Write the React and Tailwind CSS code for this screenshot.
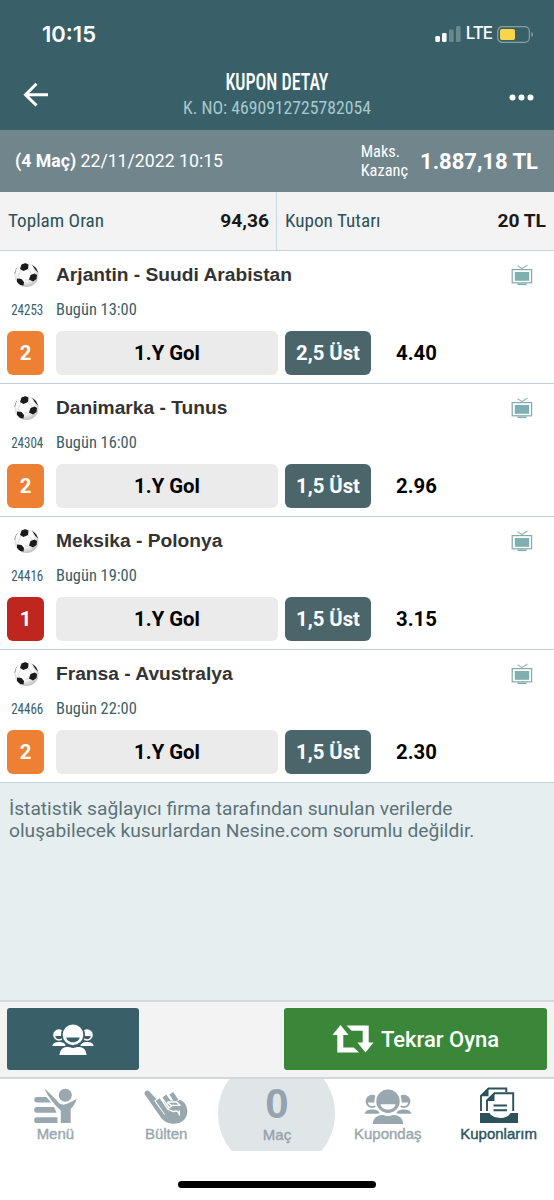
import React from 'react';

const matches = [
  { code: '24253', teams: 'Arjantin - Suudi Arabistan', time: 'Bugün 13:00', mbs: 2, pick: '2,5 Üst', odd: '4.40' },
  { code: '24304', teams: 'Danimarka - Tunus', time: 'Bugün 16:00', mbs: 2, pick: '1,5 Üst', odd: '2.96' },
  { code: '24416', teams: 'Meksika - Polonya', time: 'Bugün 19:00', mbs: 1, pick: '1,5 Üst', odd: '3.15' },
  { code: '24466', teams: 'Fransa - Avustralya', time: 'Bugün 22:00', mbs: 2, pick: '1,5 Üst', odd: '2.30' },
];

const BallIcon = () => (
  <svg width="26" height="26" viewBox="0 0 26 26">
    <defs>
      <radialGradient id="ball" cx="45%" cy="40%" r="58%">
        <stop offset="0.6" stopColor="#fbfbfb" />
        <stop offset="1" stopColor="#c4c4c4" />
      </radialGradient>
      <clipPath id="ballClip">
        <circle cx="13.5" cy="13" r="12" />
      </clipPath>
    </defs>
    <circle cx="13.5" cy="13" r="12" fill="url(#ball)" />
    <g clipPath="url(#ballClip)">
      <path d="M8 8l-3 6 3 4M15 7l4 5M12 18h5l3-3" stroke="#cfcfcf" strokeWidth="0.7" fill="none" />
      <g fill="#1a1a1a">
        <path d="M8.500 2.500L12 1l3.500 1.500-.5 4.500-4.500 2-3.500-2z" />
        <path d="M17.500 13l4-1.500 2.500 1.500-.5 4-3.500 2.500-4-2z" />
        <path d="M4 16.500l4.500.5 2.500 3-.5 3.500-3.500-.5-3-3z" />
        <path d="M1 11l1-5 3-2.500-2.500 5L2 12zM19 2.500l4 3.500 2.500 5-3.500-3.500z" />
      </g>
    </g>
  </svg>
);

const TvIcon = () => (
  <svg width="22" height="22" viewBox="0 0 22 22" fill="none">
    <path d="M6.500 1.800L11 4.500l5.500-3.500" stroke="#9fb5b8" strokeWidth="1.100" />
    <rect x="1.200" y="5.600" width="19.400" height="13.200" stroke="#82a9ac" strokeWidth="1.200" />
    <rect x="3.800" y="8" width="14.400" height="8.800" fill="#80afb1" />
    <path d="M6.500 20.300h9" stroke="#82a9ac" strokeWidth="1.600" />
  </svg>
);

const PeopleIcon = ({ width, height, bg }) => (
  <svg width={width} height={height} viewBox="0 0 42 31" fill="currentColor" stroke={bg}>
    {[7, 35].map((x) => (
      <g key={x} stroke="none">
        <circle cx={x} cy="11" r="5.8" />
        <path d={`M${x - 3.8} 12h7.6c-.6 4.4-7 4.4-7.6 0z`} fill={bg} />
        <path d={`M${x - 6.6} 22c.3-2.8 3-3.9 6.6-3.9s6.3 1.1 6.6 3.9z`} />
      </g>
    ))}
    <circle cx="21" cy="10.800" r="11.200" strokeWidth="1.700" />
    <path d="M14.300 13.500h13.400c-1 6.300-12.400 6.300-13.400 0z" fill={bg} stroke="none" />
    <path d="M6.500 31.800c.2-6.500 4.500-9.800 10-9.800 2.500 1.200 6.500 1.200 9 0 5.500 0 9.800 3.300 10 9.800z" strokeWidth="1.600" />
  </svg>
);

const MenuIcon = () => (
  <svg width="44" height="36" viewBox="0 0 44 36" fill="currentColor">
    <path d="M4 9h9.500l4.500 5.500H4A2.750 2.750 0 014 9zM4 19h17l2.500 5.700H4A2.850 2.850 0 014 19zM4 29.300h20.500V35H4a2.850 2.850 0 010-5.700z" />
    <circle cx="32.300" cy="7.200" r="6.500" />
    <path d="M11.300.5C17 5.500 23 11 26.300 15.500c3 1.500 5.500 1.500 8.200 0 3.200-1.500 6.500-3 9.200-4.800-1.200 4.300-3.400 7.800-6 10.300V35h-9.900V22.500C21.500 17 15.500 9.500 11.300.5z" />
  </svg>
);

const HandIcon = () => (
  <svg width="44" height="35" viewBox="0 0 132 105" fill="none" strokeLinecap="round" strokeLinejoin="round">
    <path
      d="M2 16C-1 6 11 1 17 8l36 40c8-12 22-18 40-18 23 0 37 16 37 37s-16 37-38 37c-20 0-34-7-43-21z"
      fill="currentColor"
    />
    <g strokeLinecap="butt">
      <path d="M39 29l31 43M58 19l29 38M79 10l20 28" stroke="#fff" strokeWidth="21" />
      <path d="M41 32l29 42M61 21l25 34M82 13l15 23" stroke="currentColor" strokeWidth="14" />
    </g>
    <path d="M75 35h31c10 6 15 17 12 29l-14 14-8-11-20 2-10-9 14-7z" fill="currentColor" />
    <path d="M72 39h26l10 10H82L70 41M84 50l-14 10 18 8c10-5 17 0 18 10V66" stroke="#fff" strokeWidth="4" />
  </svg>
);

const CouponsIcon = () => (
  <svg width="40" height="37" viewBox="0 0 40 37" fill="none" stroke="currentColor" strokeWidth="1.900">
    <path d="M2 24V9l7.500-7.500h17.800V5" />
    <path d="M1.200 9.200L9.500 1v8.200z" fill="currentColor" stroke="none" />
    <path d="M8 24V13.500L15.500 6.300h18.700V24" />
    <path d="M7.200 14l8.300-8v8z" fill="currentColor" stroke="none" />
    <path d="M14.500 18.500h13.500M14.500 23.200h13.500" />
    <path d="M1 26h9.500c4 6.500 18 6.500 21 0H39v10H1z" fill="currentColor" stroke="none" />
  </svg>
);

const RepeatIcon = () => (
  <svg width="42" height="28" viewBox="0 0 42 28" fill="currentColor">
    <path d="M8.500 0l8 10h-5.200v12.500h10.500l5.200 5H5.300V10H.5z" />
    <path d="M14.500.5h22.200v17h4.800l-8 10-8-10h5.200V5.800H19.700z" />
  </svg>
);

const MatchRow = ({ match }) => (
  <div className="h-[133px] border-b border-[#c3d2df] bg-white">
    <div className="flex h-12 items-center pl-[13px] pr-[21px]">
      <BallIcon />
      <h3 className="ml-[17px] flex-1 whitespace-nowrap font-['Liberation_Sans'] text-[19.2px] font-bold text-[#333]">
        {match.teams}
      </h3>
      <TvIcon />
    </div>
    <div className="flex h-[22px] items-center whitespace-nowrap font-['Roboto_Condensed','Roboto',sans-serif] font-stretch-condensed text-[#396069]">
      <span className="w-[45px] origin-left scale-x-[0.93] pl-3 text-[14px] leading-5">{match.code}</span>
      <span className="pl-[11px] text-[16.4px]">{match.time}</span>
    </div>
    <div className="mt-[10px] flex h-11 items-stretch pl-[7px] text-[20.3px] font-bold">
      <span
        className={`flex w-[37px] items-center justify-center rounded-md text-white ${
          match.mbs === 1 ? 'bg-[#be261e]' : 'bg-[#ee8033]'
        }`}
      >
        {match.mbs}
      </span>
      <span className="ml-3 flex w-[222px] items-center justify-center rounded-md bg-[#ebebeb] text-black">
        1.Y Gol
      </span>
      <span className="ml-[7px] flex w-[86px] items-center justify-center rounded-md bg-[#4b666b] text-white">
        {match.pick}
      </span>
      <span className="ml-[25px] flex items-center text-black">{match.odd}</span>
    </div>
  </div>
);

const StatusBar = () => (
  <div className="flex h-[68px] items-center justify-between pl-[42px] pr-5 text-white">
    <span className="font-['Inter'] text-[22px] font-semibold">10:15</span>
    <div className="flex items-center">
      <svg width="26" height="16" viewBox="0 0 26 16" fill="#fff">
        <rect x="0.300" y="10" width="4.600" height="6" rx="1.300" />
        <rect x="7" y="7" width="4.600" height="9" rx="1.300" />
        <rect x="14" y="3.500" width="4.600" height="12.500" rx="1.300" opacity="0.250" />
        <rect x="21" y="0" width="4.600" height="16" rx="1.300" opacity="0.250" />
      </svg>
      <span className="ml-[5px] mr-[5px] font-['Inter'] text-[17px] font-medium tracking-[-1px]">LTE</span>
      <svg width="37" height="17" viewBox="0 0 37 17">
        <rect x="0.700" y="0.700" width="31.600" height="15.600" rx="4.500" fill="none" stroke="#8aa0a5" strokeWidth="1.200" />
        <rect x="3" y="3" width="15" height="11" rx="2" fill="#f8d549" />
        <path d="M34.300 6c2.200.8 2.200 4.200 0 5z" fill="#8aa0a5" />
      </svg>
    </div>
  </div>
);

const Header = () => (
  <header className="h-[130px] bg-[#396069]">
    <StatusBar />
    <div className="grid h-[62px] grid-cols-[1fr_auto_1fr] text-white">
      <svg className="ml-[23px] mt-[14px]" width="26" height="26" viewBox="0 0 26 26" fill="none" stroke="#fff" strokeWidth="3">
        <path d="M13.500 1.800L2.500 12.700l11 10.800M2.500 12.700H25" />
      </svg>
      <div className="text-center font-['Roboto_Condensed','Roboto',sans-serif] font-stretch-condensed whitespace-nowrap">
        <h1 className="mt-px scale-x-[0.78] text-[23px] font-medium leading-7">KUPON DETAY</h1>
        <p className="text-[17.7px] leading-[22px] text-[#a7c8cf]">K. NO: 4690912725782054</p>
      </div>
      <svg className="ml-auto mr-5 mt-[26px]" width="25" height="7" viewBox="0 0 25 7" fill="#fff">
        <circle cx="3.500" cy="3.500" r="3" />
        <circle cx="12.500" cy="3.500" r="3" />
        <circle cx="21.500" cy="3.500" r="3" />
      </svg>
    </div>
  </header>
);

const Summary = () => (
  <>
    <div className="flex h-[62px] items-center bg-[#71858c] pl-[15px] pr-4 text-white">
      <p className="flex-1 text-[17.7px]">
        <b>(4 Maç)</b> 22/11/2022 10:15
      </p>
      <p className="mr-3 font-['Roboto_Condensed','Roboto',sans-serif] text-[16.4px] leading-[19px] font-stretch-condensed">
        Maks.
        <br />
        Kazanç
      </p>
      <strong className="text-[22px] font-bold">1.887,18 TL</strong>
    </div>
    <div className="grid h-[59px] grid-cols-2 border-b border-[#c3d2df] bg-[#f3f3f3] text-[19.2px] text-[#2f525b]">
      <div className="flex items-center justify-between border-r border-[#cbd9e3] pl-2 pr-[7px]">
        <span className="font-['Roboto_Condensed','Roboto',sans-serif] font-stretch-condensed">Toplam Oran</span>
        <b className="text-[#191919]">94,36</b>
      </div>
      <div className="flex items-center justify-between px-2">
        <span className="font-['Roboto_Condensed','Roboto',sans-serif] font-stretch-condensed">Kupon Tutarı</span>
        <b className="text-[#191919]">20 TL</b>
      </div>
    </div>
  </>
);

const Tab = ({ label, active, children }) => (
  <div className={`flex flex-col items-center pt-[7px] ${active ? 'text-[#2c525b]' : 'text-[#99a7ae]'}`}>
    <div className="flex h-[38px] items-end">{children}</div>
    <span className="font-['Liberation_Sans'] text-[15px] leading-5 [-webkit-text-stroke:0.4px_currentColor]">
      {label}
    </span>
  </div>
);

const App = () => {
  return (
    <div className="flex h-[1200px] w-[554px] flex-col overflow-hidden bg-white font-['Roboto',sans-serif]">
      <Header />
      <Summary />
      {matches.map((match) => (
        <MatchRow key={match.code} match={match} />
      ))}
      <div className="flex-1 bg-[#e6eef0] px-[9px] pt-[15px] text-[19.2px] leading-[22px] text-[#5c7379]">
        <p className="whitespace-nowrap">
          İstatistik sağlayıcı firma tarafından sunulan verilerde
          <br />
          oluşabilecek kusurlardan Nesine.com sorumlu değildir.
        </p>
      </div>

      {/* Actions */}
      <div className="flex h-[79px] justify-between border-y-2 border-[#d2d9de] bg-[#f3f3f3] px-[7px] pt-[6px] text-white">
        <button type="button" className="flex h-[62px] w-[132px] items-center justify-center rounded-[3px] bg-[#396069]">
          <PeopleIcon width="42" height="31" bg="#396069" />
        </button>
        <button
          type="button"
          className="flex h-[62px] w-[263px] items-center justify-center rounded-[3px] bg-[#3a873a] text-[22px] font-medium"
        >
          <RepeatIcon />
          <span className="ml-[7px]">Tekrar Oyna</span>
        </button>
      </div>

      {/* Bottom navigation */}
      <nav className="grid h-[72px] grid-cols-5 bg-white">
        <Tab label="Menü">
          <MenuIcon />
        </Tab>
        <Tab label="Bülten">
          <HandIcon />
        </Tab>
        <div className="-mx-1 flex justify-center overflow-hidden">
          <div className="-mt-[24px] flex size-[117px] shrink-0 flex-col items-center rounded-full bg-[#e0e6e8] pt-[31px] font-['Liberation_Sans'] text-[#94a3ad]">
            <b className="text-[42px] leading-9">0</b>
            <span className="mt-[3px] text-[15px] leading-5 [-webkit-text-stroke:0.4px_currentColor]">Maç</span>
          </div>
        </div>
        <Tab label="Kupondaş">
          <PeopleIcon width="48" height="35" bg="#fff" />
        </Tab>
        <Tab label="Kuponlarım" active>
          <CouponsIcon />
        </Tab>
      </nav>
      <div className="flex h-[49px] justify-center pt-[30px]">
        <div className="h-[7px] w-[198px] rounded-full bg-black" />
      </div>
    </div>
  );
};

export default App;
